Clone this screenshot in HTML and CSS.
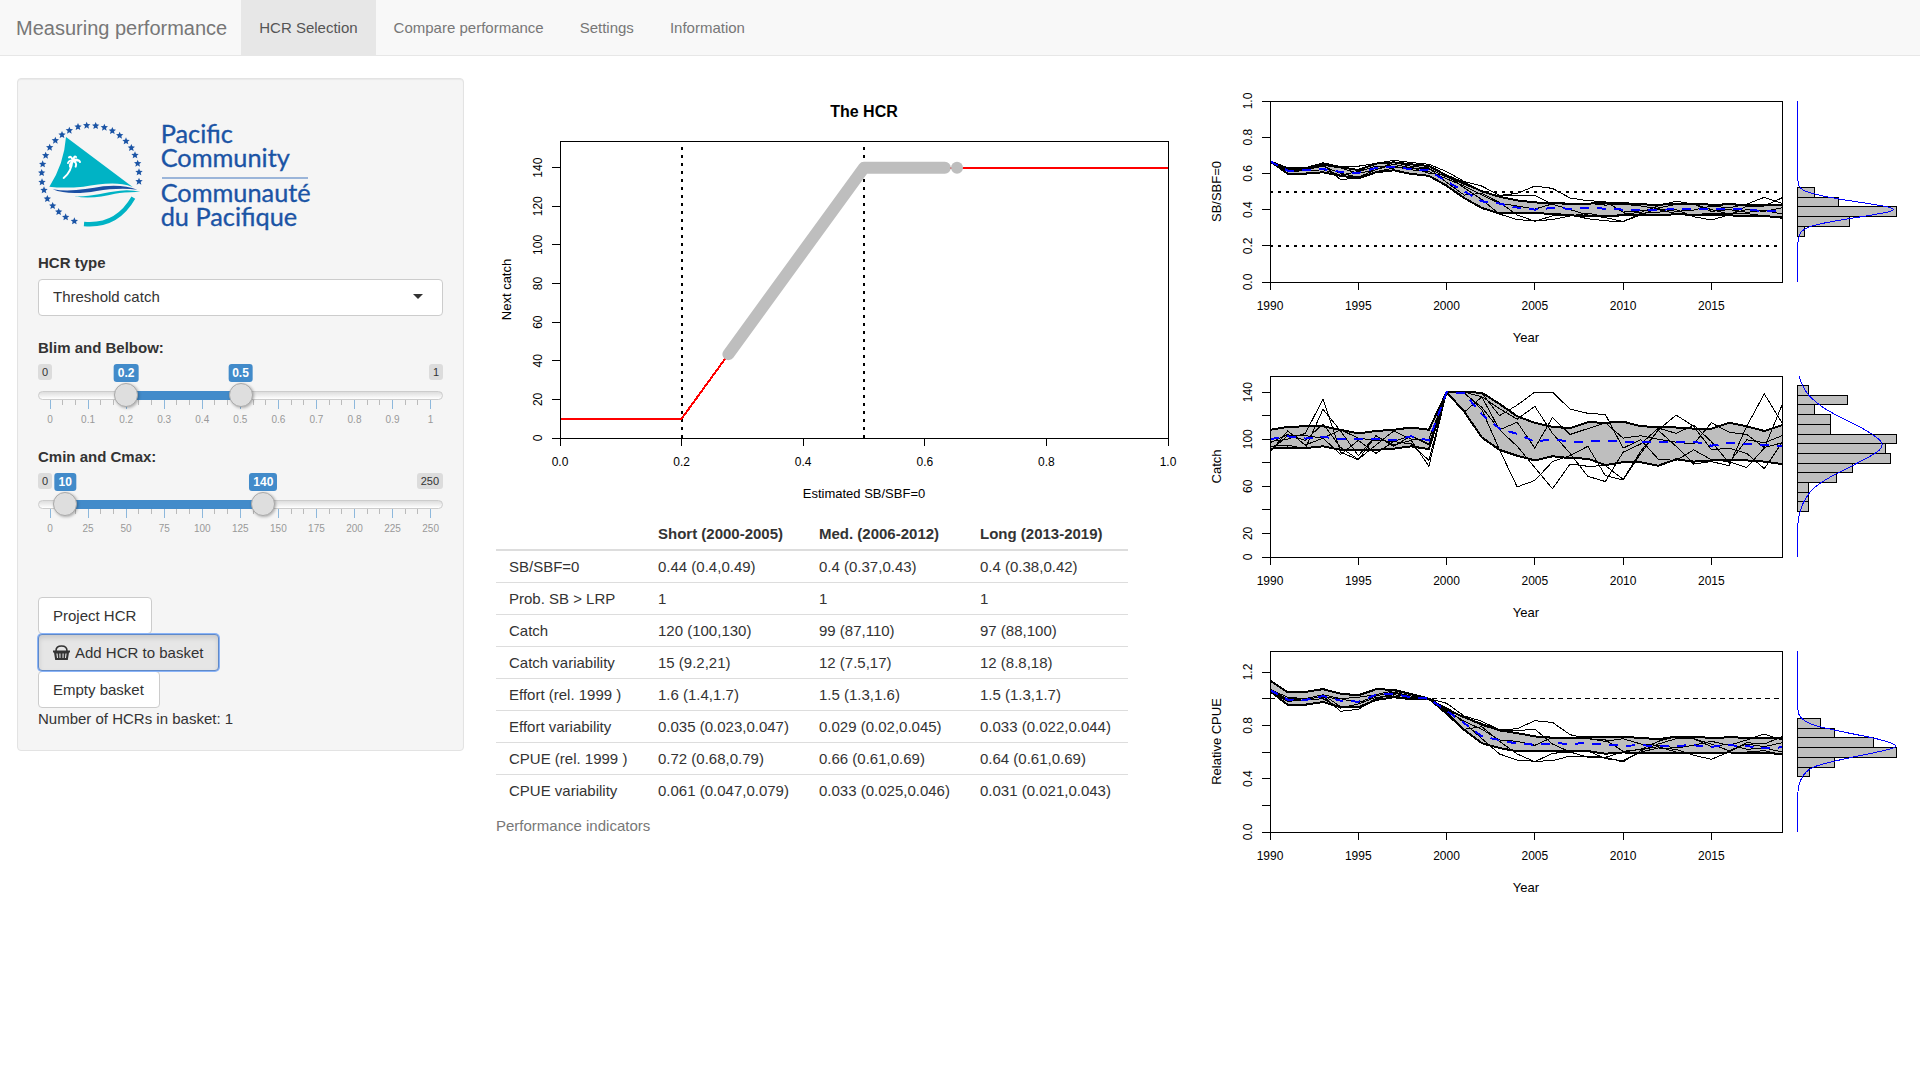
FILE: index.html
```html
<!DOCTYPE html>
<html lang="en">
<head>
<meta charset="utf-8">
<meta name="viewport" content="width=device-width, initial-scale=1">
<title>Measuring performance</title>
<link rel="stylesheet" href="styles.css">
</head>
<body>
<header class="navbar">
  <a class="brand" href="#">Measuring performance</a>
  <nav class="tabs">
    <a class="tab tab-active" href="#selection" aria-current="page">HCR Selection</a>
    <a class="tab" href="#compare">Compare performance</a>
    <a class="tab" href="#settings">Settings</a>
    <a class="tab" href="#information">Information</a>
  </nav>
</header>

<main class="layout">
  <form class="sidebar">
    <div class="well">
      <svg class="logo" viewBox="54 60 816 340" role="img" aria-label="Pacific Community logo">
        <defs>
          <path id="star" d="M0-11 3-4 11-3 5 2 7 10 0 6-7 10-5 2-11-3-3-4Z"/>
        </defs>
        <g fill="#1b54a5" id="stars"></g>
        <path fill="#00b3c5" d="M138 108 338 258C290 240 240 250 190 257Q130 262 88 257Q132 190 138 108Z"/>
        <g fill="none" stroke="#fff" stroke-linecap="round">
          <path stroke-width="6" d="M131 231Q154 213 157 180"/>
          <path stroke-width="6" d="M158 181Q148 176 144 186M158 181Q148 188 150 197M159 180Q172 184 167 197M159 179Q174 171 180 183M158 178Q154 164 147 169M160 177Q162 163 168 168M166 178 178 179"/>
        </g>
        <path fill="#1b4fa3" d="M98 265C150 274 200 264 250 256C290 251 325 256 352 266C310 261 270 264 230 270C180 279 130 279 98 265Z"/>
        <path fill="#00b3c5" d="M163 286C215 288 250 274 300 269Q335 266 361 273Q315 272 285 278C245 288 205 294 163 286Z"/>
        <path fill="none" stroke="#00b3c5" stroke-width="13" d="M340 290Q290 378 192 369"/>
        <path stroke="#7d9fcf" stroke-width="5" d="M426 231H864"/>
        <g class="logo-text">
          <text x="422" y="125">Pacific</text>
          <text x="422" y="197">Community</text>
          <text x="422" y="303">Communauté</text>
          <text x="422" y="376">du Pacifique</text>
        </g>
      </svg>

      <div class="field">
        <label class="field-label" for="hcr-type">HCR type</label>
        <div class="select-wrap">
          <select class="select" id="hcr-type">
            <option>Threshold catch</option>
          </select>
        </div>
      </div>

      <div class="field">
        <label class="field-label" for="blim">Blim and Belbow:</label>
        <div class="slider" data-min="0" data-max="1" data-step="0.05" data-from="0.2" data-to="0.5" data-id="blim" data-name="Belbow"></div>
      </div>

      <div class="field">
        <label class="field-label" for="cmin">Cmin and Cmax:</label>
        <div class="slider" data-min="0" data-max="250" data-step="5" data-from="10" data-to="140" data-id="cmin" data-name="Cmax"></div>
      </div>

      <div class="actions">
        <button class="btn" type="button">Project HCR</button>
        <button class="btn btn-pressed" type="button">
          <svg class="btn-icon" viewBox="0 0 17 15" aria-hidden="true">
            <path fill="none" stroke="currentColor" stroke-width="1.6" d="M3 6C3 2.500 5 1 8.500 1S14 2.500 14 6"/>
            <path fill="currentColor" fill-rule="evenodd" d="M0 5.500H17V7.500H16L14.800 15H2.200L1 7.500H0ZM3.400 8.500 4 13H5L4.600 8.500ZM6.300 8.500 6.500 13H7.500V8.500ZM9.500 8.500V13H10.500L10.700 8.500ZM12.400 8.500 12 13H13L13.600 8.500Z"/>
          </svg>Add HCR to basket</button>
        <button class="btn" type="button">Empty basket</button>
        <div>Number of HCRs in basket: 1</div>
      </div>
    </div>
  </form>

  <section class="hcr">
    <svg class="plot" id="hcr-plot" viewBox="0 0 687 439" role="img" aria-label="The HCR"></svg>
    <table class="indicators">
      <caption>Performance indicators</caption>
      <colgroup><col class="col-name"><col class="col-value"><col class="col-value"><col class="col-value"></colgroup>
      <thead>
        <tr><th></th><th>Short (2000-2005)</th><th>Med. (2006-2012)</th><th>Long (2013-2019)</th></tr>
      </thead>
      <tbody>
        <tr><td>SB/SBF=0</td><td>0.44 (0.4,0.49)</td><td>0.4 (0.37,0.43)</td><td>0.4 (0.38,0.42)</td></tr>
        <tr><td>Prob. SB &gt; LRP</td><td>1</td><td>1</td><td>1</td></tr>
        <tr><td>Catch</td><td>120 (100,130)</td><td>99 (87,110)</td><td>97 (88,100)</td></tr>
        <tr><td>Catch variability</td><td>15 (9.2,21)</td><td>12 (7.5,17)</td><td>12 (8.8,18)</td></tr>
        <tr><td>Effort (rel. 1999 )</td><td>1.6 (1.4,1.7)</td><td>1.5 (1.3,1.6)</td><td>1.5 (1.3,1.7)</td></tr>
        <tr><td>Effort variability</td><td>0.035 (0.023,0.047)</td><td>0.029 (0.02,0.045)</td><td>0.033 (0.022,0.044)</td></tr>
        <tr><td>CPUE (rel. 1999 )</td><td>0.72 (0.68,0.79)</td><td>0.66 (0.61,0.69)</td><td>0.64 (0.61,0.69)</td></tr>
        <tr><td>CPUE variability</td><td>0.061 (0.047,0.079)</td><td>0.033 (0.025,0.046)</td><td>0.031 (0.021,0.043)</td></tr>
      </tbody>
    </table>
  </section>

  <section class="series">
    <svg class="plot" id="plot-sb" viewBox="0 0 704 275" role="img" aria-label="SB/SBF=0 by year"></svg>
    <svg class="plot" id="plot-catch" viewBox="0 0 704 275" role="img" aria-label="Catch by year"></svg>
    <svg class="plot" id="plot-cpue" viewBox="0 0 704 275" role="img" aria-label="Relative CPUE by year"></svg>
  </section>
</main>
<script src="script.js"></script>
</body>
</html>
```
FILE: styles.css
```css
* {
  box-sizing: border-box;
}

body {
  margin: 0;
  background: #fff;
  color: #333;
  font-family: "Liberation Sans", Arial, sans-serif;
  font-size: 15px;
  line-height: 22px;
}

.navbar {
  display: flex;
  height: 56px;
  padding-left: 16px;
  background: #f8f8f8;
  border-bottom: 1px solid #e7e7e7;
}

.brand {
  display: flex;
  align-items: center;
  padding-right: 14px;
  color: #777;
  font-size: 20px;
  text-decoration: none;
}

.tabs {
  display: flex;
}

.tab {
  display: flex;
  align-items: center;
  padding: 0 18px;
  color: #777;
  text-decoration: none;
}

.tab-active {
  background: #e7e7e7;
  color: #555;
}

.layout {
  display: grid;
  grid-template-columns: 2fr 3fr 3fr;
  align-items: start;
  padding-top: 22px;
}

.sidebar,
.hcr,
.series {
  min-width: 0;
}

.sidebar {
  padding: 0 16px 0 17px;
}

.hcr {
  padding: 1px 17px 0 16px;
}

.series {
  padding: 1px 16px 0 0;
}

/* Sidebar */

.well {
  padding: 20px;
  background: #f5f5f5;
  border: 1px solid #e3e3e3;
  border-radius: 4px;
  box-shadow: inset 0 1px 1px rgba(0, 0, 0, 0.05);
}

.logo {
  display: block;
  width: 272px;
  margin: 22px 0 18px;
  overflow: visible;
}

.logo-text {
  fill: #1b54a5;
  stroke: #1b54a5;
  stroke-width: 1px;
  font-family: Lato, sans-serif;
  font-size: 76px;
}

.field {
  margin-bottom: 21px;
}

.field-label {
  display: block;
  margin-bottom: 5px;
  font-weight: bold;
}

.select-wrap {
  position: relative;
}

.select-wrap::after {
  content: "";
  position: absolute;
  top: 15px;
  right: 20px;
  border: 5px solid transparent;
  border-top-color: #333;
  border-bottom: 0;
  pointer-events: none;
}

.select {
  display: block;
  width: 100%;
  height: 37px;
  padding: 0 14px 1px;
  appearance: none;
  background: #fff;
  border: 1px solid #ccc;
  border-radius: 4px;
  color: #333;
  font: inherit;
}

.slider {
  position: relative;
  height: 61px;
}

.slider-limits {
  display: flex;
  justify-content: space-between;
  height: 19px;
}

.limit {
  height: 16px;
  padding: 0 4px;
  background: #dcdcdc;
  border-radius: 3px;
  font-size: 11px;
  line-height: 16px;
}

.value {
  position: absolute;
  top: 0;
  left: calc(12px + (100% - 24px) * var(--at));
  height: 18px;
  padding: 0 4px;
  transform: translateX(-50%);
  background: #428bca;
  border-radius: 3px;
  color: #fff;
  font-size: 12px;
  font-weight: bold;
  line-height: 18px;
}

.track {
  height: 9px;
  margin-top: 8px;
  padding: 0 12px;
  background: linear-gradient(#ddd, #fff);
  border: 1px solid #ccc;
  border-radius: 9px;
}

.fill {
  position: absolute;
  top: 27px;
  left: calc(12px + (100% - 24px) * var(--from));
  width: calc((100% - 24px) * (var(--to) - var(--from)));
  height: 9px;
  background: #428bca;
}

.thumb {
  position: absolute;
  top: 19px;
  left: 0;
  width: 100%;
  height: 24px;
  margin: 0;
  appearance: none;
  background: none;
  pointer-events: none;
}

.thumb::-webkit-slider-thumb {
  width: 24px;
  height: 24px;
  appearance: none;
  background: #dedede;
  border: 1px solid #aaa;
  border-radius: 50%;
  box-shadow: 1px 1px 3px rgba(0, 0, 0, 0.3);
  pointer-events: auto;
}

.ticks {
  display: flex;
  justify-content: space-between;
  padding: 0 12px;
}

.tick {
  display: flex;
  flex-direction: column;
  align-items: center;
  width: 0;
  color: #999;
  font-size: 10px;
  line-height: 12px;
}

.tick::before {
  content: "";
  flex: none;
  width: 1px;
  height: 5px;
  margin-bottom: 9px;
  background: #bbb;
}

.tick-major::before {
  height: 9px;
  margin-bottom: 5px;
  background: #8db8dc;
}

.actions {
  display: flex;
  flex-direction: column;
  align-items: flex-start;
  padding-top: 42px;
}

.btn {
  display: flex;
  align-items: center;
  height: 37px;
  padding: 0 15px 0 14px;
  background: #fff;
  border: 1px solid #ccc;
  border-radius: 4px;
  color: #333;
  font: inherit;
}

.btn-pressed {
  position: relative;
  background: #e6e6e6;
  border-color: #5f89c9;
  box-shadow: inset 0 3px 5px rgba(0, 0, 0, 0.12), 0 0 0 1px #8ab4f8;
}

.btn-icon {
  width: 17px;
  height: 15px;
  margin-right: 5px;
}

/* Indicator table */

.indicators {
  border-spacing: 0;
  table-layout: fixed;
  width: 632px;
  line-height: 21px;
}

.indicators caption {
  caption-side: bottom;
  padding-top: 9px;
  color: #777;
  text-align: left;
}

.col-name {
  width: 149px;
}

.col-value {
  width: 161px;
}

.indicators th,
.indicators td {
  padding: 5px 13px;
  border-bottom: 1px solid #ddd;
  text-align: left;
  white-space: nowrap;
}

.indicators th {
  border-bottom-width: 2px;
}

.indicators tr:last-child td {
  border-bottom: 0;
}

.indicators thead tr:last-child th {
  border-bottom: 2px solid #ddd;
}

/* Plots */

.plot {
  display: block;
  width: 100%;
}

.plot text {
  fill: #000;
  text-anchor: middle;
}

.plot-title {
  font-size: 16px;
  font-weight: bold;
}

.axis-title {
  font-size: 13px;
}

.axis-label {
  font-size: 12px;
}

.thin,
.thick,
.median,
.reference,
.threshold,
.rule,
.density,
.bar {
  fill: none;
  stroke: #000;
  stroke-width: 1px;
  shape-rendering: crispEdges;
}

.band {
  fill: #bebebe;
  shape-rendering: crispEdges;
}

.thick {
  stroke-width: 2px;
}

.median {
  stroke: #00f;
  stroke-width: 2px;
  stroke-dasharray: 9 8;
}

.reference {
  stroke-width: 2px;
  stroke-dasharray: 3 5;
}

.threshold {
  stroke-dasharray: 5 4;
}

.rule {
  stroke: #f00;
  stroke-width: 2px;
}

.projected {
  fill: none;
  stroke: #bebebe;
  stroke-width: 12px;
  stroke-linecap: round;
  stroke-linejoin: round;
}

.density {
  stroke: #00f;
}

.bar {
  fill: #bebebe;
}
```
FILE: script.js
```js
const NS = 'http://www.w3.org/2000/svg';

function add(parent, name, attrs, text) {
  const el = document.createElementNS(NS, name);
  for (const key in attrs) el.setAttribute(key, attrs[key]);
  if (text !== undefined) el.textContent = text;
  parent.appendChild(el);
  return el;
}

function line(svg, cls, points) {
  add(svg, 'path', { class: cls, d: 'M' + points.map(p => p.join(' ')).join('L') });
}

/* Ring of stars in the logo */
const stars = document.getElementById('stars');
[[357, 241], [357, 213], [353, 187], [345, 162], [334, 140], [318, 120], [299, 103], [277, 89], [253, 79],
 [227, 74], [200, 73], [174, 77], [148, 88], [126, 101], [106, 118], [89, 139], [77, 163], [68, 189],
 [65, 215], [66, 243], [72, 267], [82, 293], [98, 314], [116, 332], [137, 348], [163, 360]
].forEach(([x, y]) => add(stars, 'use', { href: '#star', x, y }));

/* Range sliders with two handles */
document.querySelectorAll('.slider').forEach(slider => {
  const { min, max, step, from, to, id, name } = slider.dataset;
  const at = v => (v - min) / (max - min);
  let ticks = '';
  for (let i = 0; i <= 30; i++) {
    ticks += i % 3
      ? '<span class="tick"></span>'
      : `<span class="tick tick-major">${+(max * i / 30).toFixed(1)}</span>`;
  }
  slider.innerHTML = `
    <div class="slider-limits"><span class="limit">${min}</span><span class="limit">${max}</span></div>
    <div class="track"></div>
    <div class="ticks">${ticks}</div>
    <div class="fill" style="--from:${at(from)};--to:${at(to)}"></div>
    <input class="thumb" type="range" id="${id}" min="${min}" max="${max}" step="${step}" value="${from}">
    <input class="thumb" type="range" aria-label="${name}" min="${min}" max="${max}" step="${step}" value="${to}">
    <output class="value" style="--at:${at(from)}">${from}</output>
    <output class="value" style="--at:${at(to)}">${to}</output>`;
});

/* Frame, ticks and labels shared by all plots */
function axes(svg, o) {
  const { left, right, top, bottom } = o.box;
  add(svg, 'rect', { class: 'thin', x: left, y: top, width: right - left, height: bottom - top });
  o.xTicks.forEach(([v, label]) => {
    line(svg, 'thin', [[o.x(v), bottom], [o.x(v), bottom + 8]]);
    add(svg, 'text', { class: 'axis-label', x: o.x(v), y: bottom + 28 }, label);
  });
  o.yTicks.forEach(([v, label]) => {
    line(svg, 'thin', [[left - 8, o.y(v)], [left, o.y(v)]]);
    if (label) {
      add(svg, 'text', { class: 'axis-label', transform: `translate(${left - 18} ${o.y(v)}) rotate(-90)` }, label);
    }
  });
  const midX = (left + right) / 2;
  const midY = (top + bottom) / 2;
  add(svg, 'text', { class: 'axis-title', x: midX, y: bottom + 60 }, o.xTitle);
  add(svg, 'text', { class: 'axis-title', transform: `translate(${left - 49} ${midY}) rotate(-90)` }, o.yTitle);
}

/* Harvest control rule */
{
  const svg = document.getElementById('hcr-plot');
  const box = { left: 64, right: 672, top: 62, bottom: 359 };
  const x = v => box.left + v * 608;
  const y = v => box.bottom - v * 1.931;
  const at = (a, b) => [x(a), y(b)];
  line(svg, 'reference', [[x(0.2), box.bottom], [x(0.2), box.top]]);
  line(svg, 'reference', [[x(0.5), box.bottom], [x(0.5), box.top]]);
  line(svg, 'rule', [at(0, 10), at(0.2, 10), at(0.5, 140), at(1, 140)]);
  line(svg, 'projected', [at(0.277, 43.4), at(0.5, 140), at(0.633, 140)]);
  line(svg, 'projected', [at(0.653, 140), at(0.653, 140)]);
  axes(svg, {
    box, x, y,
    xTicks: ['0.0', '0.2', '0.4', '0.6', '0.8', '1.0'].map(t => [+t, t]),
    yTicks: [0, 20, 40, 60, 80, 100, 120, 140].map(t => [t, String(t)]),
    xTitle: 'Estimated SB/SBF=0',
    yTitle: 'Next catch'
  });
  add(svg, 'text', { class: 'plot-title', x: 368, y: 38 }, 'The HCR');
}

/* Time series, 1990 to 2019, with the distribution of the final year */
function seriesPlot(id, o) {
  const svg = document.getElementById(id);
  const box = { left: 70, right: 582, top: 22, bottom: 203 };
  const x = i => box.left + i * 512 / 29;
  const y = v => box.bottom - v * 181 / o.max;
  const pts = values => values.map((v, i) => [x(i).toFixed(1), y(v).toFixed(1)]);
  o.references.forEach(([v, cls]) => line(svg, cls, [[box.left, y(v)], [box.right, y(v)]]));
  add(svg, 'path', { class: 'band', d: 'M' + pts(o.upper).concat(pts(o.lower).reverse()).join('L') + 'Z' });
  o.runs.forEach(run => line(svg, 'thin', pts(run)));
  line(svg, 'thick', pts(o.upper));
  line(svg, 'thick', pts(o.lower));
  line(svg, 'median', pts(o.median));
  axes(svg, {
    box, x, y,
    xTicks: [0, 5, 10, 15, 20, 25].map(i => [i, String(1990 + i)]),
    yTicks: o.yTicks,
    xTitle: 'Year',
    yTitle: o.title
  });
  const base = 597;
  o.bars.forEach((w, i) => {
    const a = Math.round(o.barTop + i * 9.7);
    const b = Math.round(o.barTop + (i + 1) * 9.7);
    add(svg, 'rect', { class: 'bar', x: base, y: a, width: w, height: b - a });
  });
  const zero = base + 0.2;
  const d = [[box.top, o.density[0][1]], ...o.density, [box.bottom, 0]];
  let path = `M${zero + d[0][1]} ${d[0][0]}`;
  for (let i = 1; i < d.length - 1; i++) {
    path += `Q${zero + d[i][1]} ${d[i][0]} ${zero + (d[i][1] + d[i + 1][1]) / 2} ${(d[i][0] + d[i + 1][0]) / 2}`;
  }
  add(svg, 'path', { class: 'density', d: path + `L${zero} ${box.bottom}` });
}

seriesPlot('plot-sb', {
  title: 'SB/SBF=0', max: 1,
  references: [[0.5, 'reference'], [0.2, 'reference']],
  yTicks: ['0.0', '0.2', '0.4', '0.6', '0.8', '1.0'].map(t => [+t, t]),
  upper: [.667, .628, .628, .656, .634, .619, .654, .661, .65, .641, .589, .547, .501, .471, .451, .44, .435, .433, .433, .436, .436, .429, .427, .431, .433, .427, .429, .427, .427, .427],
  lower: [.667, .599, .599, .606, .587, .573, .606, .617, .597, .587, .532, .464, .409, .379, .379, .379, .378, .368, .365, .365, .368, .368, .37, .374, .372, .368, .368, .365, .365, .355],
  median: [.667, .615, .617, .624, .608, .602, .63, .635, .624, .617, .556, .501, .446, .433, .411, .4, .409, .405, .411, .405, .4, .398, .4, .401, .405, .4, .405, .403, .389, .394],
  runs: [
    [.667, .625, .63, .655, .638, .64, .655, .672, .66, .65, .61, .555, .53, .478, .49, .53, .517, .464, .449, .444, .386, .393, .4, .378, .372, .38, .375, .378, .365, .36],
    [.667, .62, .62, .64, .6, .58, .62, .65, .63, .625, .58, .54, .5, .475, .477, .478, .43, .4, .37, .355, .335, .37, .41, .428, .43, .4, .375, .4, .39, .41],
    [.667, .61, .615, .62, .59, .61, .64, .64, .62, .61, .57, .53, .48, .435, .42, .403, .432, .43, .435, .425, .43, .42, .405, .39, .398, .42, .41, .43, .468, .435],
    [.667, .62, .62, .65, .565, .575, .61, .63, .635, .6, .59, .52, .455, .375, .345, .338, .345, .365, .38, .36, .375, .385, .42, .447, .43, .39, .4, .385, .395, .375],
    [.667, .615, .62, .645, .63, .6, .62, .66, .64, .63, .55, .48, .49, .44, .37, .336, .365, .37, .35, .338, .333, .38, .385, .4, .36, .343, .37, .42, .42, .465]
  ],
  barTop: 108, bars: [17, 41, 99, 52, 7],
  density: [[98, 0], [110, 2], [115, 16], [120, 41], [125, 74], [128, 92], [131, 98], [134, 87], [139, 56], [144, 26], [149, 7], [158, 0]]
});

seriesPlot('plot-catch', {
  title: 'Catch', max: 153.7,
  references: [],
  yTicks: [[0, '0'], [20, '20'], [40], [60, '60'], [80], [100, '100'], [120], [140, '140']],
  upper: [108, 110.5, 111, 111, 108, 105, 107, 108, 110, 108, 140, 140, 139.5, 130, 119.5, 114, 110.5, 109.5, 114.5, 114, 115, 111, 110.5, 110, 109, 109, 114, 111, 107, 112],
  lower: [92, 93, 92.5, 94, 91, 91, 91, 92, 94, 91.5, 140, 123.5, 101.5, 91, 86, 82, 85.5, 84, 83.5, 78, 80.5, 80.5, 77.5, 83, 81, 82, 82, 82, 81, 79],
  median: [100, 102.5, 100.5, 102, 100, 100, 100, 99, 102.5, 99, 140, 139, 121, 109, 104.5, 98, 100, 98, 98, 99, 98, 98, 97.5, 98, 98, 94.5, 97, 96, 95, 94.5],
  runs: [
    [89, 107, 95, 101, 108, 101, 99, 98, 103, 95, 140, 140, 139, 120, 129, 140, 140, 125.5, 122, 121, 92.5, 99.5, 83, 82, 91, 82.5, 81, 76, 92.5, 129],
    [98, 100, 105, 134, 89, 82.5, 103, 95, 99, 77, 140, 140, 136, 126, 117, 128, 105, 88, 68.5, 64, 89, 96, 109.5, 105, 112, 98, 80, 99.5, 97, 103],
    [97, 104, 99, 113, 93, 83, 95, 107, 100, 100, 140, 123, 136, 108, 114.5, 92.5, 118.5, 104, 109, 114, 101, 103, 100, 97.5, 96, 114, 106, 104, 93, 97],
    [94, 95, 92, 125.5, 107, 86, 103, 94, 103, 96, 140, 140, 125, 91, 59.5, 65, 81, 86, 94, 69, 65.5, 88, 108, 120.5, 111, 91, 92.5, 88, 75, 97],
    [90, 103, 103, 101, 87, 99, 88, 98, 96, 82, 140, 139, 127, 108, 94, 76, 58, 79, 77, 77.5, 66, 90, 107.5, 94, 79, 81, 77.5, 111, 138.5, 114]
  ],
  barTop: 31, bars: [11, 50, 17, 33, 33, 99, 88, 93, 55, 39, 11, 11, 11],
  density: [[23, 2], [36, 7], [46, 16], [56, 29], [65, 47], [75, 67], [85, 82], [91, 86], [98, 81], [107, 64], [114, 51], [121, 36], [133, 17], [143, 9], [153, 4], [165, 1], [179, 0]]
});

seriesPlot('plot-cpue', {
  title: 'Relative CPUE', max: 1.3575,
  references: [[1, 'threshold']],
  yTicks: [[0, '0.0'], [0.2], [0.4, '0.4'], [0.6], [0.8, '0.8'], [1], [1.2, '1.2']],
  upper: [1.137, 1.047, 1.05, 1.072, 1.037, 1.025, 1.07, 1.067, 1.035, 1, .92, .86, .81, .762, .742, .717, .707, .707, .71, .715, .715, .705, .697, .715, .715, .705, .71, .707, .707, .707],
  lower: [1.055, .955, .955, .975, .935, .935, .99, 1.01, .997, 1, .887, .765, .665, .63, .605, .605, .605, .605, .607, .587, .597, .59, .595, .595, .59, .59, .597, .59, .59, .587],
  median: [1.065, .992, .99, 1.02, .985, .977, 1.03, 1.035, 1.01, 1, .91, .817, .717, .69, .662, .655, .665, .662, .665, .655, .647, .65, .645, .647, .65, .64, .65, .645, .627, .635],
  runs: [
    [1.07, 1.01, 1.0, 1.03, 1.0, 1.01, 1.03, 1.06, 1.03, 1, .965, .87, .83, .765, .775, .835, .822, .73, .7, .69, .605, .62, .64, .6, .59, .6, .6, .6, .61, .58],
    [1.06, 1.0, 1.0, 1.03, .94, .93, 1.0, 1.04, 1.02, 1, .93, .86, .8, .76, .76, .772, .66, .6, .56, .56, .525, .61, .66, .7, .7, .66, .61, .66, .64, .67],
    [1.07, .98, .99, 1.0, .93, .96, 1.01, 1.02, 1.0, 1, .91, .83, .77, .69, .68, .65, .71, .7, .7, .68, .7, .66, .65, .63, .65, .68, .65, .69, .735, .69],
    [1.05, .98, .99, 1.02, .905, .92, 1.0, 1.03, 1.01, 1, .92, .82, .7, .585, .54, .53, .535, .57, .57, .56, .6, .62, .68, .715, .7, .64, .66, .62, .63, .6],
    [1.06, .99, 1.0, 1.01, 1.0, .97, 1.02, 1.05, 1.02, 1, .9, .77, .79, .68, .585, .527, .59, .6, .61, .55, .535, .6, .63, .62, .575, .545, .6, .67, .66, .715]
  ],
  barTop: 89, bars: [23, 37, 76, 99, 37, 12],
  density: [[78, 0], [88, 2], [96, 14], [101, 37], [105, 56], [110, 82], [117, 103], [122, 86], [130, 46], [137, 17], [144, 7], [158, 0]]
});
```
